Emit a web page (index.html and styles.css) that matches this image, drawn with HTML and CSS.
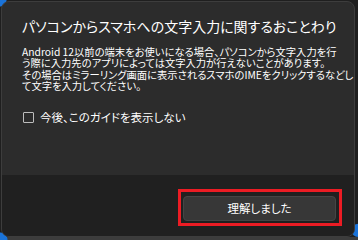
FILE: index.html
```html
<!DOCTYPE html>
<html lang="ja">
<head>
<meta charset="utf-8">
<link rel="stylesheet" href="styles.css">
</head>
<body>
<div class="dialog">
  <div class="content">
    <h1 class="title">パソコンからスマホへの文字入力に関するおことわり</h1>
    <p class="body-text">Android 12以前の端末をお使いになる場合、パソコンから文字入力を行<br>う際に入力先のアプリによっては文字入力が行えないことがあります。<br>その場合はミラーリング画面に表示されるスマホのIMEをクリックするなどし<br>て文字を入力してください。</p>
    <label class="check">
      <span class="box"></span>
      <span class="check-label">今後、このガイドを表示しない</span>
    </label>
  </div>
  <div class="footer">
    <div class="highlight">
      <button class="btn">理解しました</button>
    </div>
  </div>
</div>
</body>
</html>
```
FILE: styles.css
```css
html, body {
  margin: 0;
  padding: 0;
}
body {
  width: 358px;
  height: 240px;
  overflow: hidden;
  background:
    radial-gradient(circle at 0 0, #1a73d9 0, #1a73d9 6px, transparent 7px),
    radial-gradient(circle at 0 100%, #1a73d9 0, #1a73d9 7px, transparent 8px),
    radial-gradient(circle at 100% 96%, #1a73d9 0, #1a73d9 6px, transparent 7px),
    linear-gradient(#1f1f1f 0, #1f1f1f 237px, #3c3c3c 237px);
  font-family: "Noto Sans CJK JP", "Noto Sans", sans-serif;
  color: #ffffff;
}
.dialog {
  margin: 1px 0 0 1px;
  width: 352px;
  height: 234px;
  border: 1px solid #3d3d3d;
  border-radius: 8px;
  background: #2c2c2c;
  overflow: hidden;
  display: flex;
  flex-direction: column;
}
.content {
  flex: 1;
  padding: 14px 18px 0 20px;
}
.title {
  margin: 0;
  font-size: 14px;
  font-weight: 400;
  line-height: 20px;
  font-feature-settings: "palt";
  white-space: nowrap;
}
.body-text {
  margin: 10px 0 0 0;
  font-size: 10.3px;
  line-height: 11.3px;
  font-feature-settings: "palt";
  white-space: nowrap;
  color: #ffffff;
}
.check {
  margin-top: 19px;
  display: flex;
  align-items: center;
  gap: 6px;
}
.box {
  width: 9px;
  height: 9px;
  border: 1px solid #bdbdbd;
  border-radius: 1px;
  margin-left: 1px;
}
.check-label {
  font-size: 11.5px;
  line-height: 14px;
  font-feature-settings: "palt";
}
.footer {
  height: 61px;
  background: #202020;
  display: flex;
  justify-content: flex-end;
  align-items: flex-start;
  padding: 14px 12px 0 0;
  box-sizing: border-box;
}
.highlight {
  border: 3px solid #ec1c24;
  padding: 2px 3px 2px 2px;
}
.btn {
  width: 153px;
  height: 25px;
  border: 1px solid #454545;
  border-radius: 4px;
  background: #373737;
  color: #ffffff;
  font-family: "Noto Sans CJK JP", "Noto Sans", sans-serif;
  font-size: 11.5px;
  font-feature-settings: "palt";
  padding: 0;
}
```
